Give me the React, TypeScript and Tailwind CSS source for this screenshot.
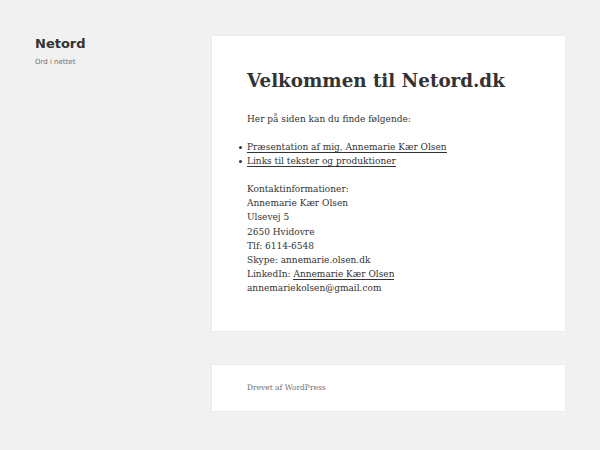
export default function App() {
  const serif = { fontFamily: '"DejaVu Serif", serif' };
  const bullet = <span className="absolute left-[-8px] top-[6px] w-[3px] h-[3px] rounded-full bg-[#333]" />;
  return (
    <div className="min-h-[450px] w-[600px] bg-[#f1f1f1] flex text-[#333]" style={serif}>
      <aside className="w-[212px] shrink-0 pl-[35px] pt-[35px]">
        <div className="text-[13px] font-bold leading-[18px] text-[#333] [font-family:'DejaVu_Sans',sans-serif]">Netord</div>
        <div className="text-[7px] leading-[12px] mt-[3px] text-[#707070] [font-family:'DejaVu_Sans',sans-serif]">Ord i nettet</div>
      </aside>
      <main className="w-[353px] shrink-0 pt-[36px]">
        <article className="bg-white pt-[33px] pb-[36px] px-[35px] shadow-[0_0_1px_rgba(0,0,0,0.15)]">
          <h1 className="text-[18.3px] font-bold leading-[24px] text-[#333]">Velkommen til Netord.dk</h1>
          <div className="mt-[19px] text-[9px] leading-[14.1px]">
            <p>Her på siden kan du finde følgende:</p>
            <ul className="list-none mt-[14px]">
              <li className="relative">{bullet}<span className="border-b border-[#333]">Præsentation af mig, Annemarie Kær Olsen</span></li>
              <li className="relative">{bullet}<span className="border-b border-[#333]">Links til tekster og produktioner</span></li>
            </ul>
            <p className="mt-[14px]">
              Kontaktinformationer:<br />
              Annemarie Kær Olsen<br />
              Ulsevej 5<br />
              2650 Hvidovre<br />
              Tlf: 6114-6548<br />
              Skype: annemarie.olsen.dk<br />
              LinkedIn: <span className="border-b border-[#333]">Annemarie Kær Olsen</span><br />
              annemariekolsen@gmail.com
            </p>
          </div>
        </article>
        <footer className="mt-[34px] bg-white h-[46px] px-[35px] flex items-center shadow-[0_0_1px_rgba(0,0,0,0.15)]">
          <span className="text-[7.5px] text-[#707070]">Drevet af WordPress</span>
        </footer>
      </main>
    </div>
  );
}
